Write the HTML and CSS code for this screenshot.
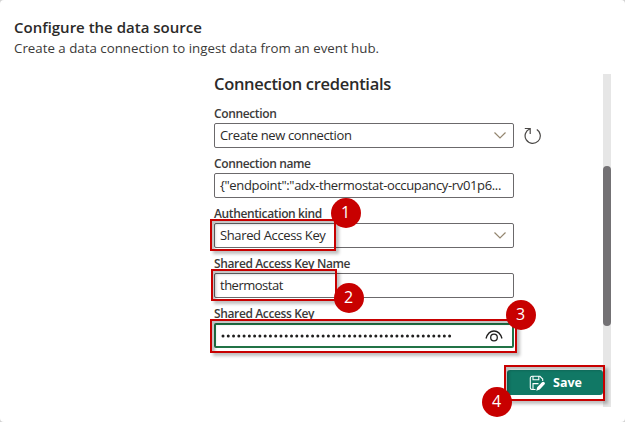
FILE: index.html
```html
<!DOCTYPE html>
<html lang="en">
<head>
<meta charset="utf-8">
<title>Configure the data source</title>
<link rel="stylesheet" href="styles.css">
</head>
<body>
<main class="dialog">
  <header class="header">
    <h1 class="title">Configure the data source</h1>
    <p class="subtitle">Create a data connection to ingest data from an event hub.</p>
  </header>
  <div class="content">
    <form class="form">
      <h2 class="section-title">Connection credentials</h2>
      <div class="group">
        <label class="label">Connection</label>
        <div class="line">
          <div class="field"><span class="value">Create new connection</span>
            <svg class="chevron" viewBox="0 0 12 7"><path d="M.5.5 6 6 11.500.5"/></svg>
          </div>
          <svg class="refresh" viewBox="0 0 18 18"><path d="M.8 1.500h5.400v5.400M6 1.700A7.600 7.600 0 1 0 12.800 2.400"/></svg>
        </div>
      </div>
      <div class="group">
        <label class="label">Connection name</label>
        <div class="field"><span class="value endpoint">{"endpoint":"adx-thermostat-occupancy-rv01p6...</span></div>
      </div>
      <div class="group">
        <label class="label">Authentication kind</label>
        <div class="field"><span class="value">Shared Access Key</span>
          <svg class="chevron" viewBox="0 0 12 7"><path d="M.5.5 6 6 11.500.5"/></svg>
        </div>
      </div>
      <div class="group">
        <label class="label">Shared Access Key Name</label>
        <div class="field"><span class="value thermostat">thermostat</span></div>
      </div>
      <div class="group">
        <label class="label">Shared Access Key</label>
        <div class="field focused">
          <svg class="dots" viewBox="0 0 234 6"><path d="M3 3H232"/></svg>
          <svg class="eye" viewBox="0 0 18 12"><path d="M1 8.500C2.500 3.500 5.500 1 9 1s6.500 2.500 8 7.500"/><circle cx="9" cy="7.500" r="3.300"/></svg>
        </div>
      </div>
    </form>
    <div class="track"><div class="thumb"></div></div>
  </div>
  <button class="save" type="button">
    <svg class="save-icon" viewBox="0 0 16 16"><path d="M6.500 14.500H3A1.700 1.700 0 0 1 1.300 12.800V3A1.700 1.700 0 0 1 3 1.300h8l2.700 2.700v2M4 1.500v3.200h5.800V1.500M4 14.300V8.600h5.500"/><path class="pencil" d="m7.300 15.700.9-3.500L13 7.300a1.500 1.500 0 0 1 2.400 2.200L10.700 14.500z"/></svg>
    <span>Save</span>
  </button>
  <div class="mark m1"></div><div class="mark m2"></div><div class="mark m3"></div><div class="mark m4"></div>
  <div class="badge b1">1</div><div class="badge b2">2</div><div class="badge b3">3</div><div class="badge b4">4</div>
</main>
</body>
</html>
```
FILE: styles.css
```css
* { box-sizing: border-box; }
body { margin: 0; background: #d2d2d2; font-family: "Open Sans", "Noto Sans", sans-serif; color: #2b2a29; }
.dialog { position: relative; width: 625px; height: 422px; overflow: hidden; background: #fff; border-radius: 4px; }
.header { height: 74px; padding: 17px 0 0 14px; }
.title { margin: 0; font-size: 15px; line-height: 21px; font-weight: 600; }
.subtitle { margin: 0; font-size: 13.300px; line-height: 20px; color: #3b3a39; white-space: nowrap; }
.content { display: flex; height: 333px; padding-left: 214px; }
.form { width: 389px; }
.section-title { margin: 0; height: 32px; font-size: 16.500px; line-height: 20px; font-weight: 600; letter-spacing: -.3px; }
.group { height: 50px; }
.label { display: block; height: 17px; font-size: 12px; line-height: 16px; font-weight: 600; letter-spacing: -.37px; color: #3b3a39; white-space: nowrap; }
.line { display: flex; align-items: center; gap: 10px; }
.field { display: flex; align-items: center; width: 300px; height: 25px; padding: 0 7px 0 5px; border: 1px solid #6b696b; border-radius: 2px; background: #fff; font-size: 13px; line-height: 22px; white-space: nowrap; }
.value { height: 23px; letter-spacing: -.37px; }
.endpoint { letter-spacing: -.09px; }
.thermostat { letter-spacing: -.5px; }
.endpoint { letter-spacing: -.35px; }
.field.focused { border: 2px solid #217346; padding: 0 9px 0 4px; }
.chevron, .eye, .refresh, .dots, .save-icon { fill: none; stroke: #4a4846; }
.chevron { width: 12px; height: 7px; margin-left: auto; stroke: #94866f; stroke-width: 1.200; }
.refresh { width: 18px; height: 18px; stroke-width: 1.200; }
.dots { width: 234px; height: 6px; }
.dots path { stroke: #201f1e; stroke-width: 3; stroke-linecap: round; stroke-dasharray: 0 5.270; }
.eye { width: 18px; height: 12px; margin-left: auto; stroke: #201f1e; stroke-width: 1.300; }
.track { width: 8px; height: 333px; padding-top: 92px; background: #e6e6e6; }
.thumb { height: 160px; border-radius: 4px; background: #737174; }
.save { position: absolute; left: 507px; top: 370px; display: flex; align-items: center; gap: 8px; width: 96px; height: 25px; padding: 0 0 0 22px; border: 0; border-radius: 3px; background: #117865; color: #fff; font: 700 12.500px/22px "Open Sans", sans-serif; }
.save-icon { width: 16px; height: 16px; stroke: #fff; stroke-width: 1.100; }
.pencil { fill: #fff; stroke: none; }
.mark { position: absolute; border: 2px solid #c80000; box-shadow: 3px 3px 3px rgba(0,0,0,.25), inset 3px 3px 3px rgba(0,0,0,.25); }
.m1 { left: 210px; top: 219px; width: 126px; height: 32px; }
.m2 { left: 211px; top: 269px; width: 126px; height: 32px; }
.m3 { left: 210px; top: 319px; width: 307px; height: 34px; }
.m4 { left: 504px; top: 365px; width: 101px; height: 36px; }
.badge { position: absolute; width: 30px; height: 30px; border-radius: 50%; background: #c80000; color: #fff; font: 16px/29px "Open Sans", sans-serif; text-align: center; }
.b1 { left: 330.500px; top: 197.500px; }
.b2 { left: 333.500px; top: 282.500px; }
.b3 { left: 505.500px; top: 299.500px; }
.b4 { left: 481.500px; top: 386.500px; }
```
